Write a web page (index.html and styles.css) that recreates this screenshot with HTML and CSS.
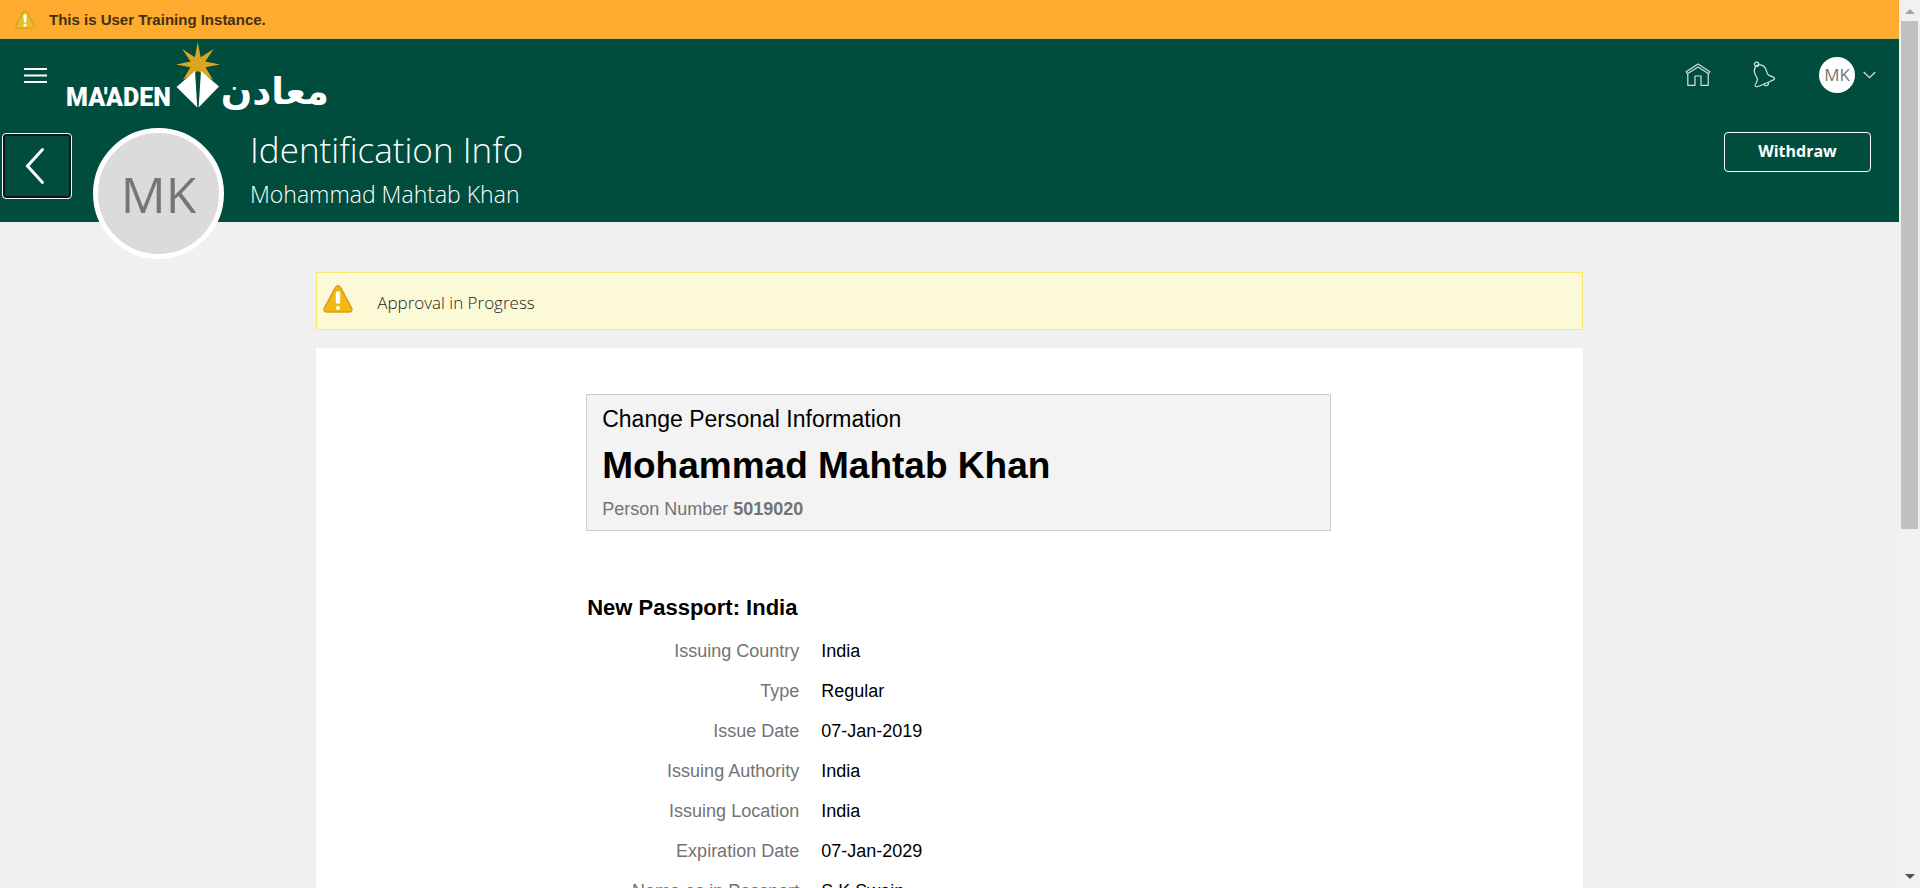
FILE: index.html
```html
<!DOCTYPE html>
<html lang="en">
<head>
<meta charset="utf-8">
<title>Identification Info</title>
<link rel="stylesheet" href="styles.css">
</head>
<body>
<div class="viewport">
  <div class="page">
    <div class="instance-bar" role="status">
      <svg class="instance-icon" width="20" height="19" viewBox="0 0 30 28" aria-hidden="true">
        <path d="M12.5 2.4Q15 -.8 17.500 2.400L28.600 23Q29.800 27 26 27H4Q.2 27 1.400 23Z" fill="#e6c02c" stroke="#c79a22" stroke-width="1.500"/>
        <path d="M12.500 7.500Q15 5 17.500 7.500L16.600 18.500H13.400Z" fill="#fff"/><circle cx="15" cy="22.500" r="2.200" fill="#fff"/>
      </svg>
      <span>This is User Training Instance.</span>
    </div>
    <header class="header">
      <div class="topbar">
        <button class="icon-btn menu-btn" type="button" aria-label="Navigator">
          <svg width="23" height="15" viewBox="0 0 23 15"><path d="M0 1H23M0 7.500H23M0 14H23" stroke="#fff" stroke-width="2"/></svg>
        </button>
        <a class="logo" href="#" aria-label="Ma'aden home">
          <svg width="270" height="84" viewBox="0 0 270 84">
            <text class="logo-latin" x="2" y="66">MA'ADEN</text>
            <path d="M133.800 2L136.700 17.200L149.800 9L141.200 21.600L156 24.500L141.500 27.200L149 40L134 31L119 40L126.300 27.200L112 24.500L126.500 21.600L118.200 9L130.900 17.200Z" fill="#daa520"/>
            <path d="M131 31L112.500 47L133.300 67.500Z" fill="#fff"/><path d="M137 31L155 46.500L134.600 67.500Z" fill="#fff"/>
            <text class="logo-arabic" x="265" y="64" direction="rtl" lang="ar">معادن</text>
          </svg>
        </a>
        <nav class="tools" aria-label="Global">
          <button class="icon-btn" type="button" aria-label="Home">
            <svg width="26" height="26" viewBox="0 0 26 26" fill="none" stroke="#cfe3dc" stroke-width="1.200" stroke-linejoin="round"><path d="M1.200 9.700L13 2L24.800 9.700L23.600 11.800L13 5L2.400 11.800Z"/><path d="M2.800 12V23.300H10V14H16V23.300H23.200V12"/></svg>
          </button>
          <button class="icon-btn" type="button" aria-label="Notifications">
            <svg width="26" height="28" viewBox="0 0 26 28" fill="none" stroke="#cfe3dc" stroke-width="1.200"><path d="M4.600 4.500C6.500 3.200 10.500 3.600 12.500 6C15 8.700 14 12 16.500 14C18.500 15.500 22 15.700 22.500 17.300C22.800 19 20.500 19.300 18.500 20.200L7.500 25C5 26 3.800 26.500 3.100 25.100C2.400 23.500 5.400 21.500 5.300 18.500C5.100 15.500 2.500 13.500 2.300 10.500C2.200 8 3 5.800 4.600 4.500Z"/><circle cx="4.600" cy="3.300" r="2.200"/><path d="M11.800 23.300A2.300 2.300 0 1 0 16.300 21.300"/></svg>
          </button>
          <button class="icon-btn user-btn" type="button" aria-label="Settings and Actions">
            <span class="user-initials">MK</span>
            <svg width="13" height="8" viewBox="0 0 13 8" fill="none" stroke="#cfe3dc" stroke-width="1.300"><path d="M.7 1L6.500 6.700L12.300 1"/></svg>
          </button>
        </nav>
      </div>
      <div class="title-row">
        <button class="back-btn" type="button" aria-label="Back">
          <svg width="20" height="38" viewBox="0 0 20 38" fill="none" stroke="#fff" stroke-width="3" stroke-linecap="round"><path d="M17.500 2.500L2.500 19L17.500 35.500"/></svg>
        </button>
        <div class="avatar">MK</div>
        <div class="titles">
          <h1 class="page-title">Identification Info</h1>
          <p class="page-subtitle">Mohammad Mahtab Khan</p>
        </div>
        <button class="withdraw-btn" type="button">Withdraw</button>
      </div>
    </header>
    <main class="content">
      <div class="alert" role="alert">
        <svg width="30" height="28" viewBox="0 0 30 28" aria-hidden="true">
          <path d="M12.500 2.400Q15 -.8 17.500 2.400L28.600 23Q29.800 27 26 27H4Q.2 27 1.400 23Z" fill="#f3b90f" stroke="#d79d1d" stroke-width="1.500"/>
          <path d="M12.800 7.500Q15 5 17.200 7.500V18.500H12.800Z" fill="#fff"/><circle cx="15" cy="23" r="2" fill="#fff"/>
        </svg>
        <span class="alert-text">Approval in Progress</span>
      </div>
      <section class="panel">
        <div class="card">
          <p class="card-kind">Change Personal Information</p>
          <h2 class="card-name">Mohammad Mahtab Khan</h2>
          <p class="card-number">Person Number <strong>5019020</strong></p>
        </div>
        <h3 class="section-title">New Passport: India</h3>
        <dl class="fields">
          <dt>Issuing Country</dt><dd>India</dd>
          <dt>Type</dt><dd>Regular</dd>
          <dt>Issue Date</dt><dd>07-Jan-2019</dd>
          <dt>Issuing Authority</dt><dd>India</dd>
          <dt>Issuing Location</dt><dd>India</dd>
          <dt>Expiration Date</dt><dd>07-Jan-2029</dd>
          <dt>Name as in Passport</dt><dd>S K Swain</dd>
        </dl>
      </section>
    </main>
  </div>
  <div class="scrollbar" aria-hidden="true">
    <svg class="scroll-arrow" width="10" height="5" viewBox="0 0 10 5"><path d="M0 5L5 0L10 5Z" fill="#a3a3a3"/></svg>
    <div class="scroll-track"><div class="scroll-thumb"></div></div>
    <svg class="scroll-arrow" width="10" height="5" viewBox="0 0 10 5"><path d="M0 0L5 5L10 0Z" fill="#505050"/></svg>
  </div>
</div>
</body>
</html>
```
FILE: styles.css
```css
* { box-sizing: border-box; }
body, h1, h2, h3, p, dl, dd { margin: 0; }
body { background: #f0f0f0; color: #000; font-family: "Liberation Sans", Arial, sans-serif; font-size: 18px; }
button { font: inherit; color: inherit; cursor: pointer; }

.viewport { display: flex; height: 100vh; overflow: hidden; }
.page { flex: 1; min-width: 0; overflow: hidden; }

.instance-bar { display: flex; align-items: center; gap: 14px; height: 39px; padding: 0 15px; background: #ffab2d; border-bottom: 1px solid #dcae50; color: #42300f; font-size: 15px; font-weight: bold; }

.header { background: #004c3d; color: #fff; font-family: "Open Sans", "Segoe UI", sans-serif; }
.topbar { display: flex; align-items: flex-start; height: 89px; padding-left: 24px; padding-right: 23px; }
.icon-btn { display: flex; align-items: center; padding: 0; border: 0; background: none; }
.menu-btn { margin-top: 29px; }
.logo { display: block; margin-top: 1px; margin-left: 17px; }
.logo svg { display: block; }
.logo-latin { font-family: Roboto, sans-serif; font-size: 25px; font-weight: 900; fill: #fff; }
.logo-arabic { font-family: "DejaVu Sans", sans-serif; font-size: 37px; font-weight: bold; fill: #fff; }
.tools { display: flex; align-items: center; gap: 41px; height: 71px; margin-left: auto; }
.user-btn { gap: 8px; }
.user-initials { display: flex; align-items: center; justify-content: center; width: 36px; height: 36px; border-radius: 50%; background: #fff; color: #767676; font-size: 17px; }

.title-row { display: flex; align-items: flex-start; height: 94px; padding-left: 2px; padding-right: 28px; }
.back-btn { display: flex; align-items: center; justify-content: center; width: 70px; height: 66px; margin-top: 5px; padding: 0 4px 0 0; border: 1px solid #fff; border-radius: 4px; background: #004c3d; box-shadow: inset 0 0 0 2px #0b1512; }
.avatar { display: flex; align-items: center; justify-content: center; width: 131px; height: 131px; margin-left: 21px; border: 5px solid #fff; border-radius: 50%; background: #dbdbdb; color: #767676; font-size: 50px; z-index: 1; }
.titles { margin-left: 26px; }
.page-title { font-size: 35px; font-weight: 300; line-height: 44px; }
.page-subtitle { font-size: 23px; font-weight: 300; line-height: 44px; }
.withdraw-btn { width: 147px; height: 40px; margin-top: 4px; margin-left: auto; padding-bottom: 3px; border: 1px solid #fff; border-radius: 4px; background: none; font-size: 16px; font-weight: 700; }

.content { width: 66.7%; margin: 0 auto; padding-top: 50px; }
.alert { display: flex; height: 58px; padding: 12px 6px; border: 1px solid #f5e96f; background: #fcfad6; color: #222; font-family: "Open Sans", "Segoe UI", sans-serif; }
.alert-text { margin-left: 24px; font-size: 17px; font-weight: 300; line-height: 36px; }
.panel { min-height: 900px; margin-top: 18px; padding: 46px 252px 0 270px; background: #fff; }
.card { padding: 10px 15px; border: 1px solid #ccc; background: #f3f3f3; }
.card-kind { font-size: 23px; line-height: 28px; }
.card-name { padding-top: 9px; padding-bottom: 8px; font-size: 37px; line-height: 48px; }
.card-number { color: #737373; font-size: 18px; line-height: 22px; }
.section-title { margin-top: 63px; margin-left: 1px; font-size: 22px; line-height: 28px; }
.fields { display: grid; grid-template-columns: 213px 1fr; column-gap: 22px; margin-top: 9px; line-height: 40px; }
.fields dt { color: #737373; text-align: right; }

.scrollbar { display: flex; flex-direction: column; align-items: center; width: 21px; padding: 9px 2px; background: #f1f1f1; }
.scroll-track { flex: 1; width: 100%; padding: 7px 0; }
.scroll-thumb { height: 60%; background: #c1c1c1; }
```
